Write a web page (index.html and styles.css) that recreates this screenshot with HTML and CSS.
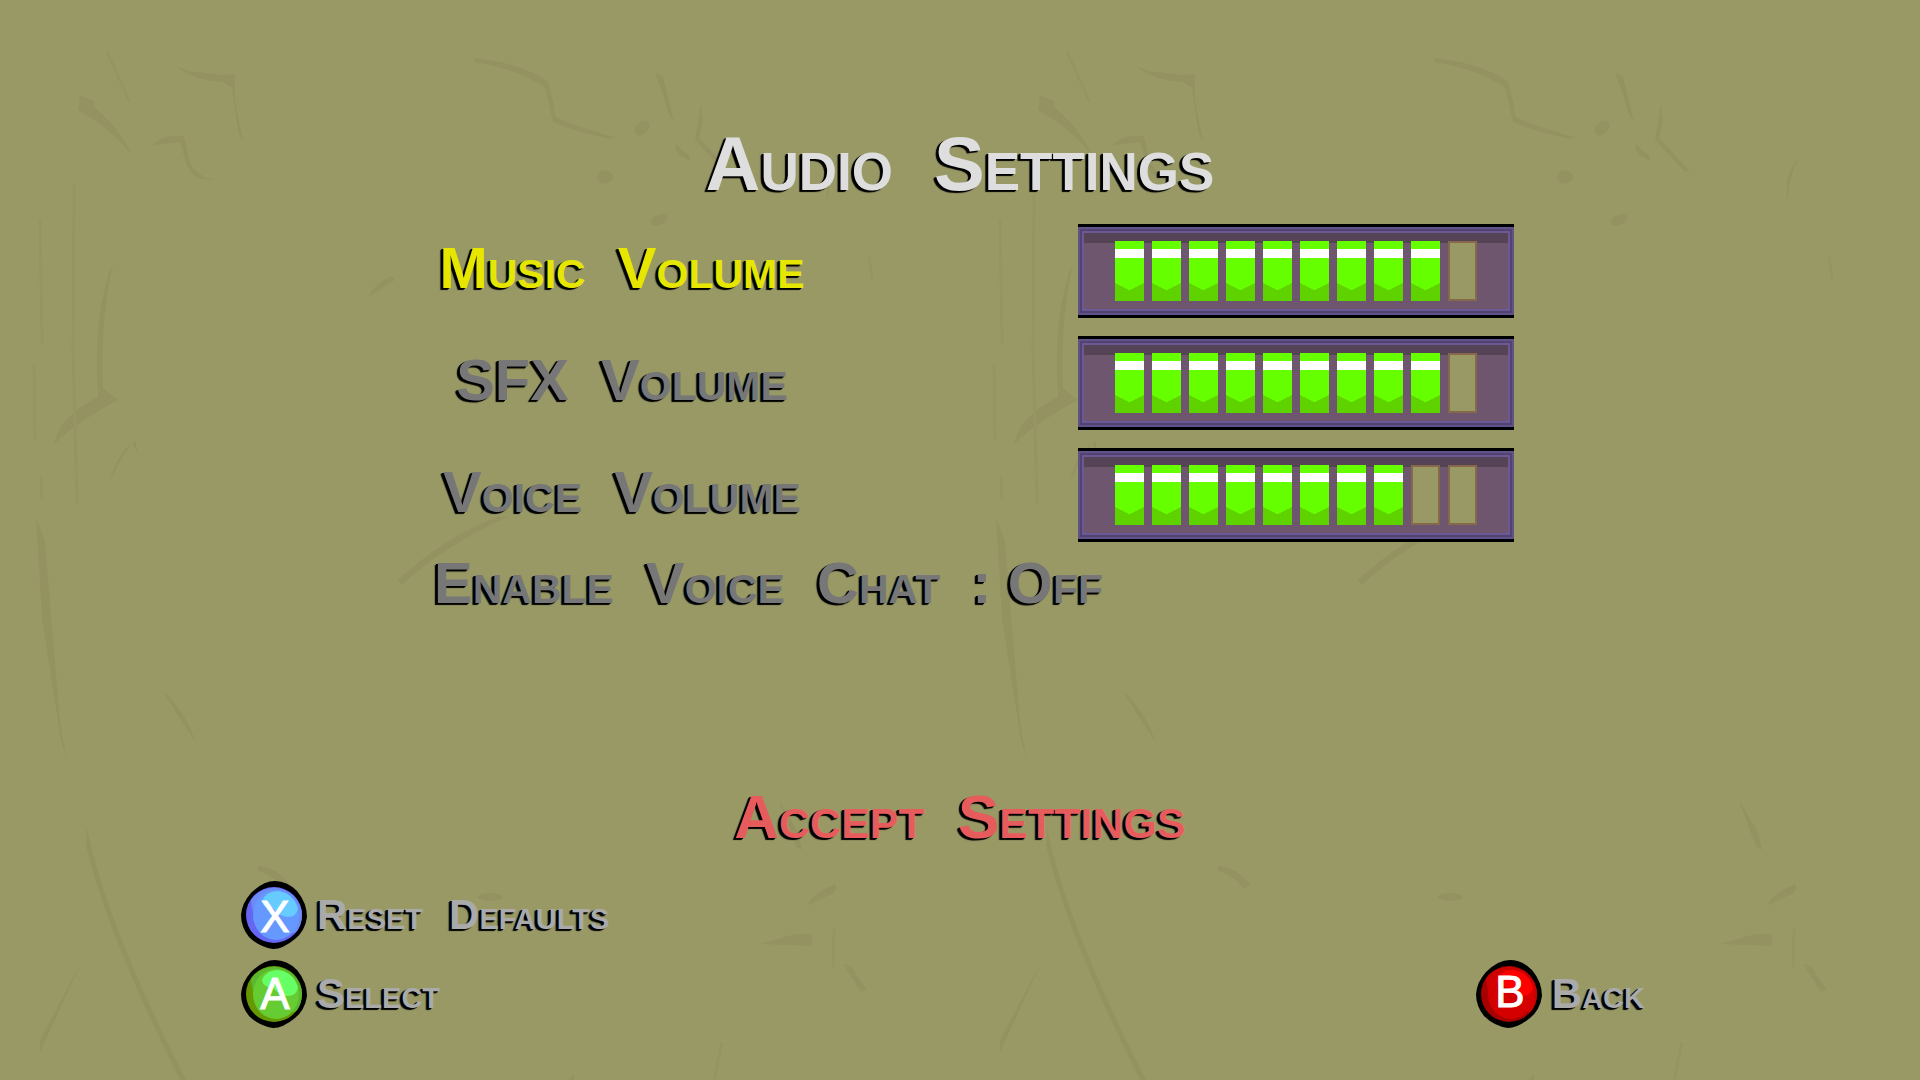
FILE: index.html
```html
<!DOCTYPE html>
<html lang="en">

<head>
    <meta charset="UTF-8">
    <meta name="viewport" content="width=device-width, initial-scale=1.0">
    <title>Audio Settings</title>
    <link rel="stylesheet" href="styles.css">
</head>

<body>
    <!-- cracked wall, repeats every 960px -->
    <svg class="wall" aria-hidden="true">
        <defs>
            <pattern id="cracks" width="960" height="1080" patternUnits="userSpaceOnUse">
                <g class="crack-fill">
                    <path d="M175 65Q186 72 198 72L223 75L235 73V100L243 141L238 132L232 88L223 82Q190 80 175 65z" />
                    <path d="M80 95L95 101L94 107Q120 128 132 155Q112 130 78 110z" />
                    <path d="M153 145Q160 134 184 136L190 162Q196 176 215 180L199 179Q188 172 185 160L180 142z" />
                    <path d="M474 58Q520 62 549 82L556 117Q585 130 616 137L610 139Q575 132 553 122L545 88Q520 70 474 62z" />
                    <path d="M655 72L663 77L674 121L669 115z" />
                    <path d="M701 103L703 120L699 138L730 171L725 172L695 140z" />
                    <path d="M674 143L690 156V161L678 155z" />
                    <path d="M114 260Q100 320 103 388L118 400Q80 420 54 444Q60 415 98 397Q92 310 114 260z" />
                    <path d="M135 440Q118 460 110 484Q114 456 135 440zM135 440L138 452L133 446z" />
                    <path d="M367 298Q374 284 391 276L395 280z" />
                    <path d="M498 516Q440 540 398 580L402 585Q445 545 508 517z" />
                    <path d="M36 518L45 540L60 720L67 763L60 735L42 620z" />
                    <path d="M162 690Q185 710 196 743Q180 720 162 690z" />
                    <path d="M87 827Q105 920 186 1080H180Q105 930 86 845z" />
                    <path d="M84 957L40 1040V1052L62 1005z" />
                    <path d="M258 866Q275 866 291 885L283 889Q275 876 258 871z" />
                    <path d="M835 884Q838 888 834 893L807 906Q812 893 835 884z" />
                    <path d="M759 944L795 934H812V946z" />
                    <path d="M843 964L851 966L867 990L861 992z" />
                    <path d="M778 798L798 832L802 850L796 847z" />
                    <path d="M839 157Q828 178 828 201Q822 178 839 157z" />
                    <path d="M569 1080L574 1073V1080z" />
                    <ellipse cx="642" cy="128" rx="6" ry="9" transform="rotate(45 642 128)" />
                    <ellipse cx="605" cy="177" rx="8" ry="7" />
                    <ellipse cx="659" cy="220" rx="9" ry="5" transform="rotate(-25 659 220)" />
                    <ellipse cx="490" cy="897" rx="13" ry="4" />
                </g>
                <g class="crack-line">
                    <path d="M107 52L129 100" />
                    <path d="M74 186L73 350L77 502" />
                    <path d="M40 220L42 344" />
                    <path d="M34 365L35 440" />
                    <path d="M41 478L42 498" />
                    <path d="M869 258L872 279" />
                    <path d="M834 929L833 967" />
                    <path d="M722 1043L714 1080" />
                </g>
            </pattern>
        </defs>
        <rect width="100%" height="100%" fill="url(#cracks)" />
    </svg>

    <h1 class="title"><span>Audio</span> <span>Settings</span></h1>

    <main class="settings">
        <div class="row">
            <label class="label active" for="music"><span>Music</span> <span>Volume</span></label>
            <div class="meter">
                <div class="cells">
                    <i class="cell on"></i><i class="cell on"></i><i class="cell on"></i><i class="cell on"></i><i class="cell on"></i>
                    <i class="cell on"></i><i class="cell on"></i><i class="cell on"></i><i class="cell on"></i><i class="cell"></i>
                </div>
                <input type="range" id="music" min="0" max="10" value="9">
            </div>
        </div>
        <div class="row">
            <label class="label" for="sfx"><span>SFX</span> <span>Volume</span></label>
            <div class="meter">
                <div class="cells">
                    <i class="cell on"></i><i class="cell on"></i><i class="cell on"></i><i class="cell on"></i><i class="cell on"></i>
                    <i class="cell on"></i><i class="cell on"></i><i class="cell on"></i><i class="cell on"></i><i class="cell"></i>
                </div>
                <input type="range" id="sfx" min="0" max="10" value="9">
            </div>
        </div>
        <div class="row">
            <label class="label" for="voice"><span>Voice</span> <span>Volume</span></label>
            <div class="meter">
                <div class="cells">
                    <i class="cell on"></i><i class="cell on"></i><i class="cell on"></i><i class="cell on"></i><i class="cell on"></i>
                    <i class="cell on"></i><i class="cell on"></i><i class="cell on"></i><i class="cell"></i><i class="cell"></i>
                </div>
                <input type="range" id="voice" min="0" max="10" value="8">
            </div>
        </div>
        <button type="button" class="label chat"><span>Enable</span> <span>Voice</span> <span>Chat</span> <span>:</span> Off</button>
    </main>

    <button type="button" class="accept"><span>Accept</span> <span>Settings</span></button>

    <footer class="footer">
        <div class="hints">
            <button type="button" class="hint">
                <svg class="pad" viewBox="0 0 66 68" aria-hidden="true">
                    <path d="M34 0Q46 0 56 10Q66 22 66 36Q64 50 54 58Q42 68 32 68Q18 66 8 56Q0 46 0 34Q1 22 10 12Q22 0 34 0z" />
                    <circle cx="33" cy="34" r="28" fill="#6666f5" />
                    <path d="M10 19A28 28 0 0 1 61 33Q61 46 54 52Q12 54 10 19z" fill="#6c8cf5" />
                    <ellipse cx="35" cy="34" rx="23" ry="25" fill="#6699ff" />
                    <path d="M21 20Q25 10 37 10Q52 12 57 27Q56 36 46 36Q36 34 32 27Q22 28 21 20z" fill="#66ccff" />
                    <text x="34" y="51">X</text>
                </svg>
                <span>Reset</span> <span>Defaults</span>
            </button>
            <button type="button" class="hint">
                <svg class="pad" viewBox="0 0 66 68" aria-hidden="true">
                    <path d="M34 0Q46 0 56 10Q66 22 66 36Q64 50 54 58Q42 68 32 68Q18 66 8 56Q0 46 0 34Q1 22 10 12Q22 0 34 0z" />
                    <circle cx="33" cy="34" r="28" fill="#669900" />
                    <path d="M10 19A28 28 0 0 1 61 33Q61 46 54 52Q12 54 10 19z" fill="#5cb82e" />
                    <ellipse cx="35" cy="34" rx="23" ry="25" fill="#66cc33" />
                    <path d="M21 20Q25 10 37 10Q52 12 57 27Q56 36 46 36Q36 34 32 27Q22 28 21 20z" fill="#66ff66" />
                    <text x="34" y="49">A</text>
                </svg>
                <span>Select</span>
            </button>
        </div>
        <button type="button" class="hint back">
            <svg class="pad" viewBox="0 0 66 68" aria-hidden="true">
                <path d="M34 0Q46 0 56 10Q66 22 66 36Q64 50 54 58Q42 68 32 68Q18 66 8 56Q0 46 0 34Q1 22 10 12Q22 0 34 0z" />
                <circle cx="33" cy="34" r="28" fill="#a80000" />
                <path d="M10 19A28 28 0 0 1 61 33Q61 46 54 52Q12 54 10 19z" fill="#cc0000" />
                <ellipse cx="35" cy="34" rx="23" ry="25" fill="#d40000" />
                <path d="M21 20Q25 10 37 10Q52 12 57 27Q56 36 46 36Q36 34 32 27Q22 28 21 20z" fill="#ff0000" />
                <text x="34" y="47">B</text>
            </svg>
            <span>Back</span>
        </button>
    </footer>
</body>

</html>
```
FILE: styles.css
```css
* {
    box-sizing: border-box;
    margin: 0;
    padding: 0;
}

body {
    display: flex;
    flex-direction: column;
    align-items: center;
    min-height: 100vh;
    padding: 122px 0 52px;
    background: #999966;
    font-family: "Liberation Sans", Arial, sans-serif;
    font-weight: bold;
    font-variant: small-caps;
    text-shadow: -2px 1px 0 #000, -3px 2px 1px #000;
}

button {
    border: 0;
    background: none;
    font: inherit;
    text-shadow: inherit;
    cursor: pointer;
}

span + span {
    margin-left: 16px;
}

.wall {
    position: absolute;
    top: 0;
    left: 0;
    width: 100%;
    height: 100%;
    z-index: -1;
}

.crack-fill {
    fill: #949261;
}

.crack-line {
    fill: none;
    stroke: #959462;
    stroke-width: 3;
    stroke-linecap: round;
}

.title {
    margin-bottom: 18px;
    color: #dedede;
    font-size: 76px;
    line-height: 84px;
}

.title span + span {
    margin-left: 20px;
}

.settings {
    display: flex;
    flex-direction: column;
    gap: 18px;
    width: 1108px;
    max-width: 100%;
    padding-left: 28px;
}

.row {
    display: flex;
    align-items: center;
    justify-content: space-between;
}

.label {
    width: 376px;
    padding-bottom: 6px;
    color: #777777;
    font-size: 58px;
    line-height: 46px;
    text-align: center;
    white-space: nowrap;
}

.label.active {
    color: #e6e600;
}

.label.chat {
    align-self: flex-start;
    width: auto;
}

/* volume meter */

.meter {
    display: grid;
    width: 436px;
    height: 94px;
    border-top: 3px solid #000;
    border-bottom: 3px solid #000;
    background: linear-gradient(#554455 16px, #6f566f 16px);
    box-shadow: inset 0 0 0 2px #62528a, inset 0 0 0 4px #514272, inset 0 0 0 6px #6a5992;
}

.cells,
.meter input {
    grid-area: 1 / 1;
}

.cells {
    display: flex;
    gap: 8px;
    padding: 14px 37px;
}

.cell {
    width: 29px;
    height: 60px;
    border: 2px solid #86694a;
    background: #999966;
}

.cell.on {
    border: 0;
    background:
        linear-gradient(#fff, #fff) 0 8px / 100% 9px no-repeat,
        linear-gradient(to top right, #5fd300 50%, transparent 50%) 0 42px / 50% 7px no-repeat,
        linear-gradient(to top left, #5fd300 50%, transparent 50%) 100% 42px / 50% 7px no-repeat,
        linear-gradient(#66ff00 49px, #5fd300 49px);
}

.meter input {
    width: 100%;
    height: 100%;
    opacity: 0;
    cursor: pointer;
}

.accept {
    margin-top: auto;
    margin-bottom: 36px;
    color: #e65c5c;
    font-size: 62px;
    line-height: 56px;
}

/* button prompts */

.footer {
    display: flex;
    align-items: flex-end;
    justify-content: space-between;
    width: 75%;
    padding: 0 35px 0 1px;
}

.hints {
    display: flex;
    flex-direction: column;
    align-items: flex-start;
    gap: 11px;
}

.hint {
    display: flex;
    align-items: center;
    gap: 10px;
    color: #aaaaaa;
    font-size: 42px;
    line-height: 68px;
}

.pad {
    width: 66px;
    height: 68px;
}

.pad text {
    fill: #fff;
    stroke: #fff;
    stroke-width: 1px;
    font-size: 44px;
    font-weight: normal;
    text-anchor: middle;
    text-shadow: none;
}

@media screen and (max-width: 1108px) {
    .row {
        flex-direction: column;
        gap: 18px;
    }

    .settings {
        align-items: center;
        padding-left: 0;
    }
}
```
